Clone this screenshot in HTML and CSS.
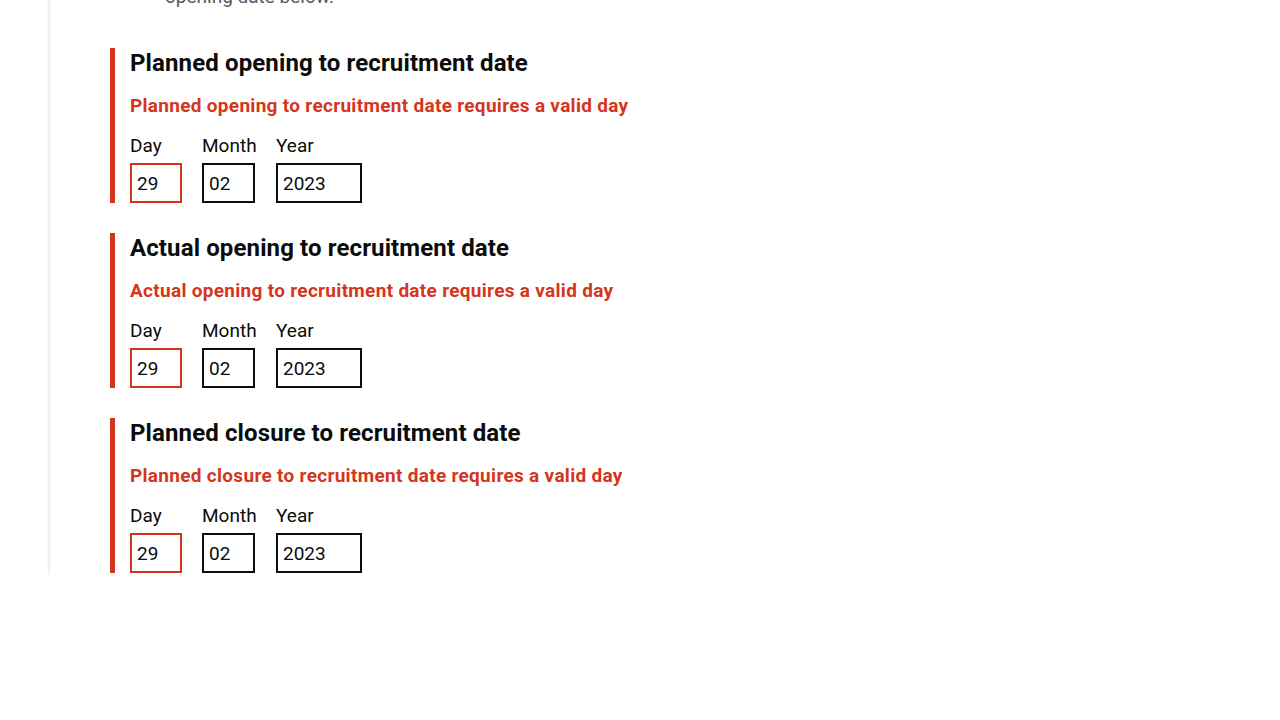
FILE: index.html
```html
<!DOCTYPE html>
<html lang="en">
<head>
<meta charset="utf-8">
<title>Dates</title>
<link rel="stylesheet" href="styles.css">
</head>
<body>
<div class="panel">
  <p class="hint">opening date below.</p>
  <div class="groups">
    <div class="group">
      <h2 class="legend">Planned opening to recruitment date</h2>
      <p class="error">Planned opening to recruitment date requires a valid day</p>
      <div class="date">
        <div class="item item-day"><label class="label">Day</label><input class="input w-day err" value="29"></div>
        <div class="item item-month"><label class="label">Month</label><input class="input w-month" value="02"></div>
        <div class="item"><label class="label">Year</label><input class="input w-year" value="2023"></div>
      </div>
    </div>
    <div class="group">
      <h2 class="legend">Actual opening to recruitment date</h2>
      <p class="error">Actual opening to recruitment date requires a valid day</p>
      <div class="date">
        <div class="item item-day"><label class="label">Day</label><input class="input w-day err" value="29"></div>
        <div class="item item-month"><label class="label">Month</label><input class="input w-month" value="02"></div>
        <div class="item"><label class="label">Year</label><input class="input w-year" value="2023"></div>
      </div>
    </div>
    <div class="group">
      <h2 class="legend">Planned closure to recruitment date</h2>
      <p class="error">Planned closure to recruitment date requires a valid day</p>
      <div class="date">
        <div class="item item-day"><label class="label">Day</label><input class="input w-day err" value="29"></div>
        <div class="item item-month"><label class="label">Month</label><input class="input w-month" value="02"></div>
        <div class="item"><label class="label">Year</label><input class="input w-year" value="2023"></div>
      </div>
    </div>
  </div>
</div>
</body>
</html>
```
FILE: styles.css
```css
html, body {
  margin: 0;
  padding: 0;
  background: #ffffff;
  font-family: Roboto, "Liberation Sans", sans-serif;
  color: #0b0c0c;
}
.panel {
  margin-left: 50px;
  padding: 0 0 2px 60px;
  background: #ffffff;
  box-shadow: -1px 0 3px rgba(0, 0, 0, 0.12);
}
.hint {
  margin: -16px 0 39px 55px;
  font-size: 19px;
  line-height: 25px;
  color: #505a5f;
}
.groups {
  display: flex;
  flex-direction: column;
  gap: 30px;
}
.group {
  border-left: 5px solid #d4351c;
  padding-left: 15px;
}
.legend {
  margin: 0 0 15px;
  font-size: 24px;
  line-height: 30px;
  font-weight: 700;
  letter-spacing: 0.12px;
}
.error {
  margin: 0 0 15px;
  font-size: 19px;
  line-height: 25px;
  font-weight: 700;
  color: #d4351c;
  letter-spacing: 0.3px;
}
.date {
  display: flex;
  gap: 20px;
}
.item {
  display: flex;
  flex-direction: column;
}
.item-month {
  width: 54px;
  margin-right: 0;
}
.label {
  font-size: 19px;
  line-height: 25px;
  margin-bottom: 5px;
  white-space: nowrap;
}
.input {
  box-sizing: border-box;
  height: 40px;
  border: 2px solid #0b0c0c;
  border-radius: 0;
  padding: 5px;
  margin: 0;
  font-family: Roboto, "Liberation Sans", sans-serif;
  font-size: 19px;
  color: #0b0c0c;
  background: #ffffff;
  outline: none;
}
.input.err {
  border-color: #d4351c;
}
.w-day { width: 52px; }
.w-month { width: 53px; }
.w-year { width: 86px; }
```
